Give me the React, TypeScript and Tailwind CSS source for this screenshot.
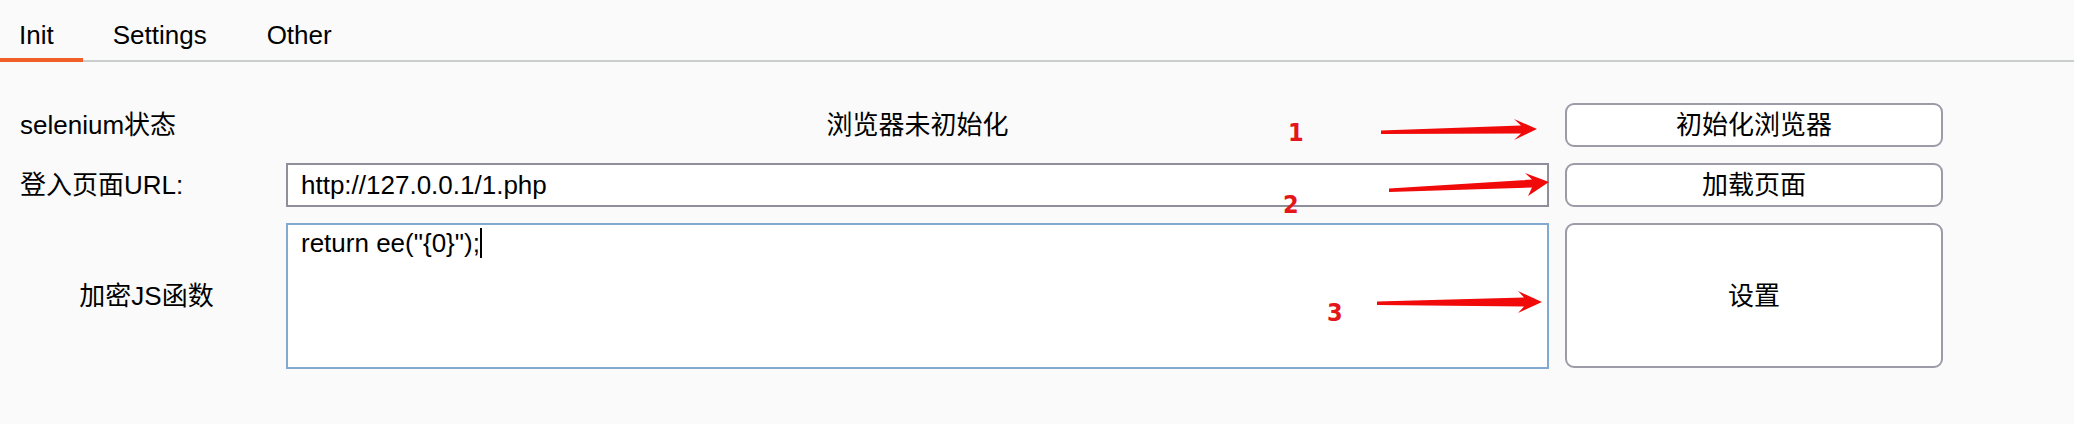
import React from 'react';

const tabs = ['Init', 'Settings', 'Other'];

const Arrows = () => (
    <svg className="absolute left-0 top-0" width="2074" height="424" viewBox="0 0 2074 424">
        <polygon fill="#f00a0a" points="1381,130.5 1521,125.5 1514,119 1537,129 1514,140 1521,133.5 1381,134" />
        <polygon fill="#f00a0a" points="1389,188.5 1532,179.5 1525,173 1549,182 1528,196 1532,187.5 1389,192" />
        <polygon fill="#f00a0a" points="1377,301.5 1524,297.5 1518,291 1542,302 1518,313 1524,306.5 1377,305" />
    </svg>
);

const Mark = ({ n, cls }: { n: string; cls: string }) => (
    <span className={`absolute text-[25px] leading-none font-bold text-[#e3161b] font-['Liberation_Sans_Narrow','DejaVu_Sans_Condensed',sans-serif] ${cls}`}>{n}</span>
);

export default function App() {
    return (
        <div className="relative w-[2074px] h-[424px] bg-[#fafafa] text-black text-[26px] leading-[30px] font-['Liberation_Sans','Noto_Sans_CJK_SC',sans-serif]">
            {/* tab strip */}
            <div className="flex h-[62px] border-b-2 border-[#c9cdcd]">
                {tabs.map((t, i) => (
                    <div
                        key={t}
                        className={`relative pt-[20px] ${i === 0 ? 'pl-[19px] pr-[29px]' : 'px-[30px]'}`}
                    >
                        {t}
                        {i === 0 && <div className="absolute left-0 right-0 bottom-[-2px] h-[4px] bg-[#ef5f27]" />}
                    </div>
                ))}
            </div>

            <div className="pt-[41px] pl-[20px] grid grid-cols-[266px_1263px_394px] grid-rows-[44px_44px_146px] gap-y-[16px]">
                {/* row 1 */}
                <div className="flex items-center">selenium状态</div>
                <div className="flex items-center justify-center">浏览器未初始化</div>
                <button className="ml-[16px] flex items-center justify-center bg-white border-2 border-[#9c9ba8] rounded-[9px]">
                    初始化浏览器
                </button>

                {/* row 2 */}
                <div className="flex items-center">登入页面URL:</div>
                <input
                    readOnly
                    value="http://127.0.0.1/1.php"
                    className="h-[44px] bg-white border-2 border-[#8f8e9b] pl-[13px] outline-none"
                />
                <button className="ml-[16px] flex items-center justify-center bg-white border-2 border-[#9c9ba8] rounded-[9px]">
                    加载页面
                </button>

                {/* row 3 */}
                <div className="flex items-center justify-center pr-[13px]">加密JS函数</div>
                <div className="bg-white border-2 border-[#82aad0] pl-[13px] pt-[3px]">
                    return ee("{'{0}'}");<span className="inline-block w-[2px] h-[30px] bg-black align-top" />
                </div>
                <button className="ml-[16px] h-[145px] flex items-center justify-center bg-white border-2 border-[#9c9ba8] rounded-[9px]">
                    设置
                </button>
            </div>

            <Arrows />
            <Mark n="1" cls="left-[1288px] top-[120px]" />
            <Mark n="2" cls="left-[1283px] top-[192px]" />
            <Mark n="3" cls="left-[1327px] top-[300px]" />
        </div>
    );
}
